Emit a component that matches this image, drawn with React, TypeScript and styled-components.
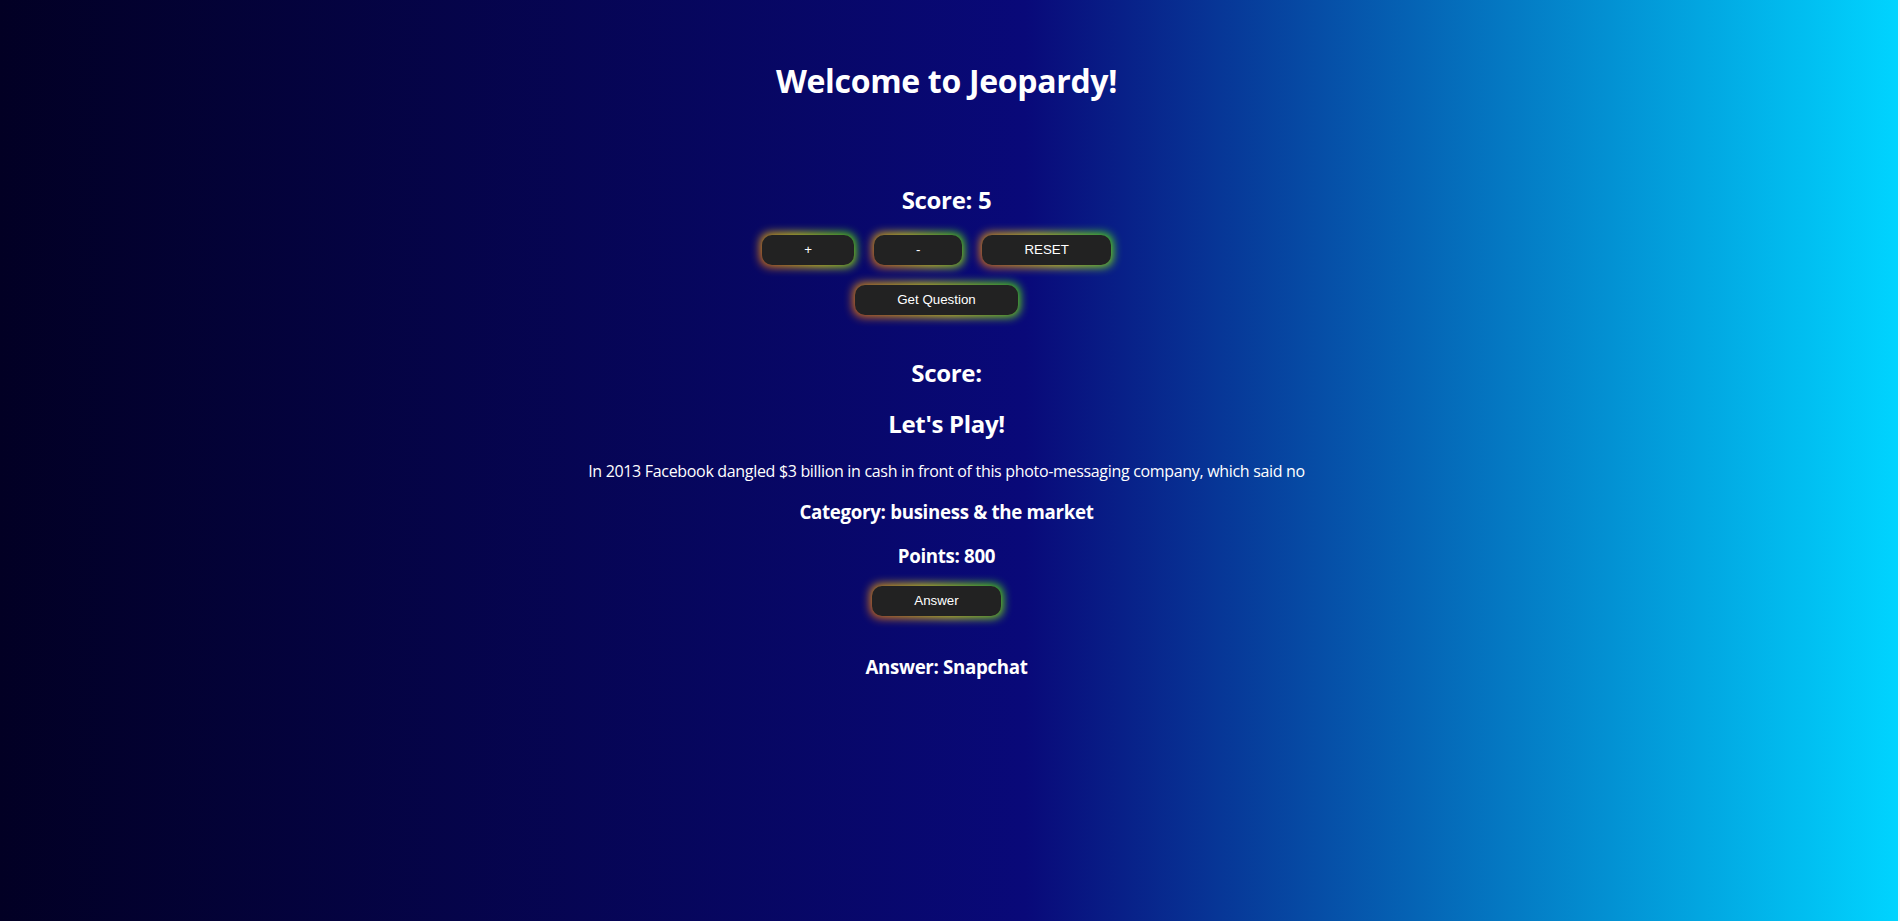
import React from "react";
import styled, { createGlobalStyle } from "styled-components";

const Global = createGlobalStyle`
  html, body {
    margin: 0;
    padding: 0;
    background: #e8f9ff;
  }
  * { box-sizing: border-box; }
`;

const Page = styled.div`
  min-height: 100vh;
  margin-right: 2px;
  padding: 61px 5px 40px 0;
  background: linear-gradient(90deg, #020024 0%, #090979 54%, #00d4ff 100%);
  display: flex;
  flex-direction: column;
  align-items: center;
  color: #ffffff;
  text-align: center;
  font-family: "Open Sans", "Noto Sans", sans-serif;
  letter-spacing: -0.02em;
`;

const Title = styled.h1`
  margin: 0;
  font-size: 32px;
  line-height: 40px;
  font-weight: 700;
`;

const Heading = styled.h2<{ $top: number }>`
  margin: ${(p) => p.$top}px 0 0;
  font-size: 24px;
  line-height: 30px;
  font-weight: 700;
`;

const SubHeading = styled.h3<{ $top: number }>`
  margin: ${(p) => p.$top}px 0 0;
  font-size: 18.72px;
  line-height: 24px;
  font-weight: 700;
`;

const Question = styled.p`
  margin: 22px 0 0;
  font-size: 16px;
  line-height: 20px;
  font-weight: 400;
`;

const ButtonRow = styled.div<{ $top: number }>`
  display: flex;
  margin-top: ${(p) => p.$top}px;
`;

const GlowButton = styled.button`
  position: relative;
  z-index: 0;
  height: 30px;
  margin-right: 20px;
  padding: 0 42px;
  border: none;
  border-radius: 10px;
  background: transparent;
  color: #ffffff;
  font-family: "Liberation Sans", Arial, sans-serif;
  font-size: 13.33px;
  letter-spacing: normal;
  line-height: 30px;
  cursor: pointer;

  &::before {
    content: "";
    position: absolute;
    inset: -2px;
    border-radius: 10px;
    background: linear-gradient(45deg, #ff7300 0%, #fffb00 50%, #48ff00 100%);
    filter: blur(5px);
    opacity: 0.85;
    z-index: -1;
  }

  &::after {
    content: "";
    position: absolute;
    inset: 0;
    border-radius: 10px;
    background: #222222;
    z-index: -1;
  }
`;

export default function App() {
  return (
    <>
      <Global />
      <Page>
        <Title>Welcome to Jeopardy!</Title>
        <Heading $top={84}>Score: 5</Heading>
        <ButtonRow $top={20}>
          <GlowButton>+</GlowButton>
          <GlowButton>-</GlowButton>
          <GlowButton>RESET</GlowButton>
        </ButtonRow>
        <ButtonRow $top={20}>
          <GlowButton>Get Question</GlowButton>
        </ButtonRow>
        <Heading $top={43}>Score:</Heading>
        <Heading $top={21}>Let's Play!</Heading>
        <Question>
          In 2013 Facebook dangled $3 billion in cash in front of this photo-messaging company, which said no
        </Question>
        <SubHeading $top={19}>Category: business &amp; the market</SubHeading>
        <SubHeading $top={20}>Points: 800</SubHeading>
        <ButtonRow $top={18}>
          <GlowButton>Answer</GlowButton>
        </ButtonRow>
        <SubHeading $top={39}>Answer: Snapchat</SubHeading>
      </Page>
    </>
  );
}
